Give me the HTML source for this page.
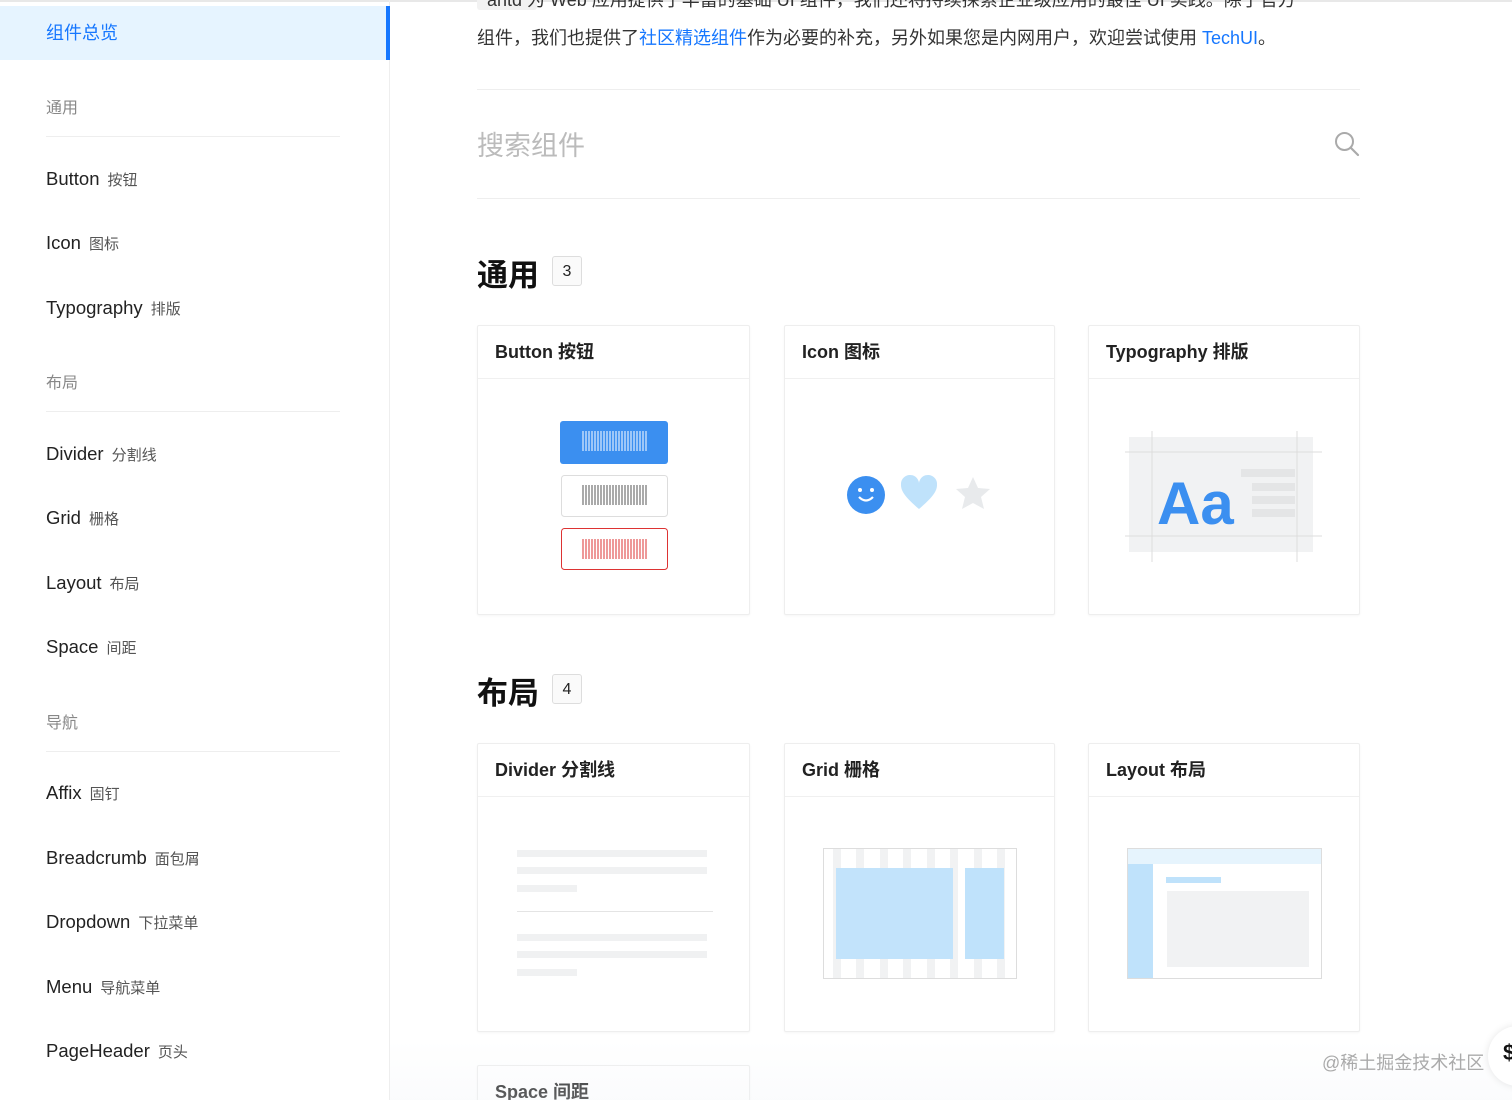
<!DOCTYPE html>
<html><head><meta charset="utf-8"><style>
*{margin:0;padding:0;box-sizing:border-box}
html,body{width:1512px;height:1100px;overflow:hidden}
body{background:#fff;font-family:"Liberation Sans","Noto Sans CJK SC",sans-serif;color:#222;position:relative}
.topline{position:absolute;left:0;top:0;width:1512px;height:2px;background:#e8e8e8}
.side{position:absolute;left:0;top:0;width:390px;height:1100px;border-right:1px solid #eee}
.active{position:absolute;left:0;top:6px;width:390px;height:54px;background:#e6f4ff;color:#1677ff;font-size:18px;padding-left:46px;line-height:54px;border-right:4px solid #1677ff}
.grp{position:absolute;left:46px;font-size:16px;color:#888}
.dv{position:absolute;left:46px;width:294px;height:1px;background:#eee}
.it{position:absolute;left:46px;font-size:18.5px;color:#222}
.it small{font-size:15px;color:#555;margin-left:8px}
.p{position:absolute;top:24px;left:477px;font-size:18px;color:#333;white-space:nowrap}
.p a{color:#1677ff;text-decoration:none}
.hl{position:absolute;left:477px;width:883px;height:1px;background:#eee}
.h{position:absolute;left:477px;font-size:31px;font-weight:bold;color:#111}
.badge{position:absolute;width:30px;height:30px;border:1px solid #ddd;border-radius:3px;font-size:16px;text-align:center;line-height:29px;background:#fafafa;color:#222}
.card{position:absolute;border:1px solid #eee;border-radius:2px;background:#fff;box-shadow:0 1px 2px rgba(0,0,0,.04)}
.card .t{height:53px;border-bottom:1px solid #f0f0f0;padding-left:17px;line-height:52px;font-size:18px;font-weight:bold;color:#222}
</style></head><body>
<div class="topline"></div>
<div class="side">
<div class="active">组件总览</div>
<div class="grp" style="top:94px">通用</div><div class="dv" style="top:136px"></div>
<div class="it" style="top:168px">Button<small>按钮</small></div>
<div class="it" style="top:232px">Icon<small>图标</small></div>
<div class="it" style="top:297px">Typography<small>排版</small></div>
<div class="grp" style="top:369px">布局</div><div class="dv" style="top:411px"></div>
<div class="it" style="top:443px">Divider<small>分割线</small></div>
<div class="it" style="top:507px">Grid<small>栅格</small></div>
<div class="it" style="top:572px">Layout<small>布局</small></div>
<div class="it" style="top:636px">Space<small>间距</small></div>
<div class="grp" style="top:709px">导航</div><div class="dv" style="top:751px"></div>
<div class="it" style="top:782px">Affix<small>固钉</small></div>
<div class="it" style="top:847px">Breadcrumb<small>面包屑</small></div>
<div class="it" style="top:911px">Dropdown<small>下拉菜单</small></div>
<div class="it" style="top:976px">Menu<small>导航菜单</small></div>
<div class="it" style="top:1040px">PageHeader<small>页头</small></div>
</div>
<div style="position:absolute;left:477px;top:-14px;width:60px;height:24px;background:#f2f2f2;border-radius:3px"></div>
<div class="p" style="top:-14px;left:487px">antd  为 Web 应用提供了丰富的基础 UI 组件，我们还将持续探索企业级应用的最佳 UI 实践。除了官方</div>
<div class="p">组件，我们也提供了<a>社区精选组件</a>作为必要的补充，另外如果您是内网用户，欢迎尝试使用 <a>TechUI</a>。</div>
<div class="hl" style="top:89px"></div>
<div style="position:absolute;left:477px;top:124px;font-size:27px;color:#bbb">搜索组件</div>
<svg style="position:absolute;left:1334px;top:131px" width="26" height="26" viewBox="0 0 26 26"><circle cx="10.5" cy="10.5" r="8.5" fill="none" stroke="#aaa" stroke-width="2"/><path d="M17 17L24 24" stroke="#aaa" stroke-width="2.2" stroke-linecap="round"/></svg>
<div class="hl" style="top:198px"></div>
<div class="h" style="top:250px">通用</div><div class="badge" style="left:552px;top:256px">3</div>
<div class="card" style="left:477px;top:325px;width:273px;height:290px"><div class="t">Button 按钮</div>
<svg width="273" height="236"><rect x="82" y="42" width="108" height="43" rx="3" fill="#3b8ff0"/><g stroke="#fff"><path d="M105 52v20M108 52v20M111 52v20M114 52v20M117 52v20M120 52v20M123 52v20M126 52v20M129 52v20M132 52v20M135 52v20M138 52v20M141 52v20M144 52v20M147 52v20M150 52v20M153 52v20M156 52v20M159 52v20M162 52v20M165 52v20M168 52v20"/></g>
<rect x="83.5" y="96.5" width="106" height="41" rx="3" fill="#fff" stroke="#ddd"/><g stroke="#555"><path d="M105 106v20M108 106v20M111 106v20M114 106v20M117 106v20M120 106v20M123 106v20M126 106v20M129 106v20M132 106v20M135 106v20M138 106v20M141 106v20M144 106v20M147 106v20M150 106v20M153 106v20M156 106v20M159 106v20M162 106v20M165 106v20M168 106v20"/></g>
<rect x="83.5" y="149.5" width="106" height="41" rx="3" fill="#fff" stroke="#d33"/><g stroke="#d33"><path d="M105 160v20M108 160v20M111 160v20M114 160v20M117 160v20M120 160v20M123 160v20M126 160v20M129 160v20M132 160v20M135 160v20M138 160v20M141 160v20M144 160v20M147 160v20M150 160v20M153 160v20M156 160v20M159 160v20M162 160v20M165 160v20M168 160v20"/></g></svg></div>
<div class="card" style="left:784px;top:325px;width:271px;height:290px"><div class="t">Icon 图标</div>
<svg width="271" height="236"><circle cx="81" cy="116" r="19" fill="#3b8ff0"/><circle cx="75" cy="111" r="2" fill="#fff"/><circle cx="87" cy="111" r="2" fill="#fff"/><path d="M74 118q7 7 14 0" stroke="#fff" stroke-width="2.2" fill="none"/>
<path d="M134 130C120 118 116 112 116 106a9 9 0 0 1 18-2a9 9 0 0 1 18 2c0 6-4 12-18 24z" fill="#bfe2fb"/>
<path d="M188 98l5 11 12 1-9 8 3 12-11-6-11 6 3-12-9-8 12-1z" fill="#e8eaec"/></svg></div>
<div class="card" style="left:1088px;top:325px;width:272px;height:290px"><div class="t">Typography 排版</div>
<svg width="272" height="236"><rect x="40" y="58" width="184" height="115" fill="#f1f2f3"/><path d="M36 73H233M36 157H233" stroke="#ddd"/><path d="M63 52V183M208 52V183" stroke="#ddd"/>
<rect x="152" y="90" width="54" height="8" fill="#e4e5e6"/><rect x="163" y="104" width="43" height="8" fill="#e4e5e6"/><rect x="163" y="117" width="43" height="8" fill="#e4e5e6"/><rect x="163" y="130" width="43" height="8" fill="#e4e5e6"/>
<text x="68" y="145" font-family="Liberation Sans" font-weight="bold" font-size="60" fill="#3b8ff0">Aa</text></svg></div>
<div class="h" style="top:668px">布局</div><div class="badge" style="left:552px;top:674px">4</div>
<div class="card" style="left:477px;top:743px;width:273px;height:289px"><div class="t">Divider 分割线</div>
<svg width="273" height="235"><g fill="#f0f1f2"><rect x="39" y="53" width="190" height="7"/><rect x="39" y="70" width="190" height="7"/><rect x="39" y="88" width="60" height="7"/><rect x="39" y="137" width="190" height="7"/><rect x="39" y="154" width="190" height="7"/><rect x="39" y="172" width="60" height="7"/></g><path d="M39 114.5H235" stroke="#e4e4e4"/></svg></div>
<div class="card" style="left:784px;top:743px;width:271px;height:289px"><div class="t">Grid 栅格</div>
<svg width="271" height="235"><rect x="38.5" y="51.5" width="193" height="130" fill="#fff" stroke="#ddd"/><g fill="#f1f2f3"><rect x="48" y="52" width="8" height="129"/><rect x="71" y="52" width="8" height="129"/><rect x="95" y="52" width="8" height="129"/><rect x="118" y="52" width="8" height="129"/><rect x="142" y="52" width="8" height="129"/><rect x="165" y="52" width="8" height="129"/><rect x="189" y="52" width="8" height="129"/><rect x="212" y="52" width="8" height="129"/></g><rect x="51" y="71" width="117" height="91" fill="#bfe2fb" opacity=".95"/><rect x="180" y="71" width="39" height="91" fill="#bfe2fb"/></svg></div>
<div class="card" style="left:1088px;top:743px;width:272px;height:289px"><div class="t">Layout 布局</div>
<svg width="272" height="235"><rect x="38.5" y="51.5" width="194" height="130" fill="#fff" stroke="#ddd"/><rect x="39" y="52" width="193" height="15" fill="#e6f4fd"/><rect x="39" y="67" width="25" height="114" fill="#bfe2fb"/><rect x="77" y="80" width="55" height="6" fill="#bfe2fb"/><rect x="78" y="94" width="142" height="76" fill="#f1f2f3"/></svg></div>
<div class="card" style="left:477px;top:1065px;width:273px;height:60px"><div class="t" style="border:none">Space 间距</div></div>
<div style="position:absolute;left:390px;top:1040px;width:1122px;height:60px;background:linear-gradient(rgba(245,247,250,0),rgba(240,243,247,.3))"></div>
<div style="position:absolute;left:1322px;top:1049px;font-size:18px;color:#aaa">@稀土掘金技术社区</div>
<div style="position:absolute;left:1488px;top:1026px;width:60px;height:60px;border-radius:50%;background:#fff;box-shadow:0 0 8px rgba(0,0,0,.1)"></div>
<div style="position:absolute;left:1503px;top:1040px;font-size:22px;font-weight:bold;color:#111">$</div>
</body></html>
